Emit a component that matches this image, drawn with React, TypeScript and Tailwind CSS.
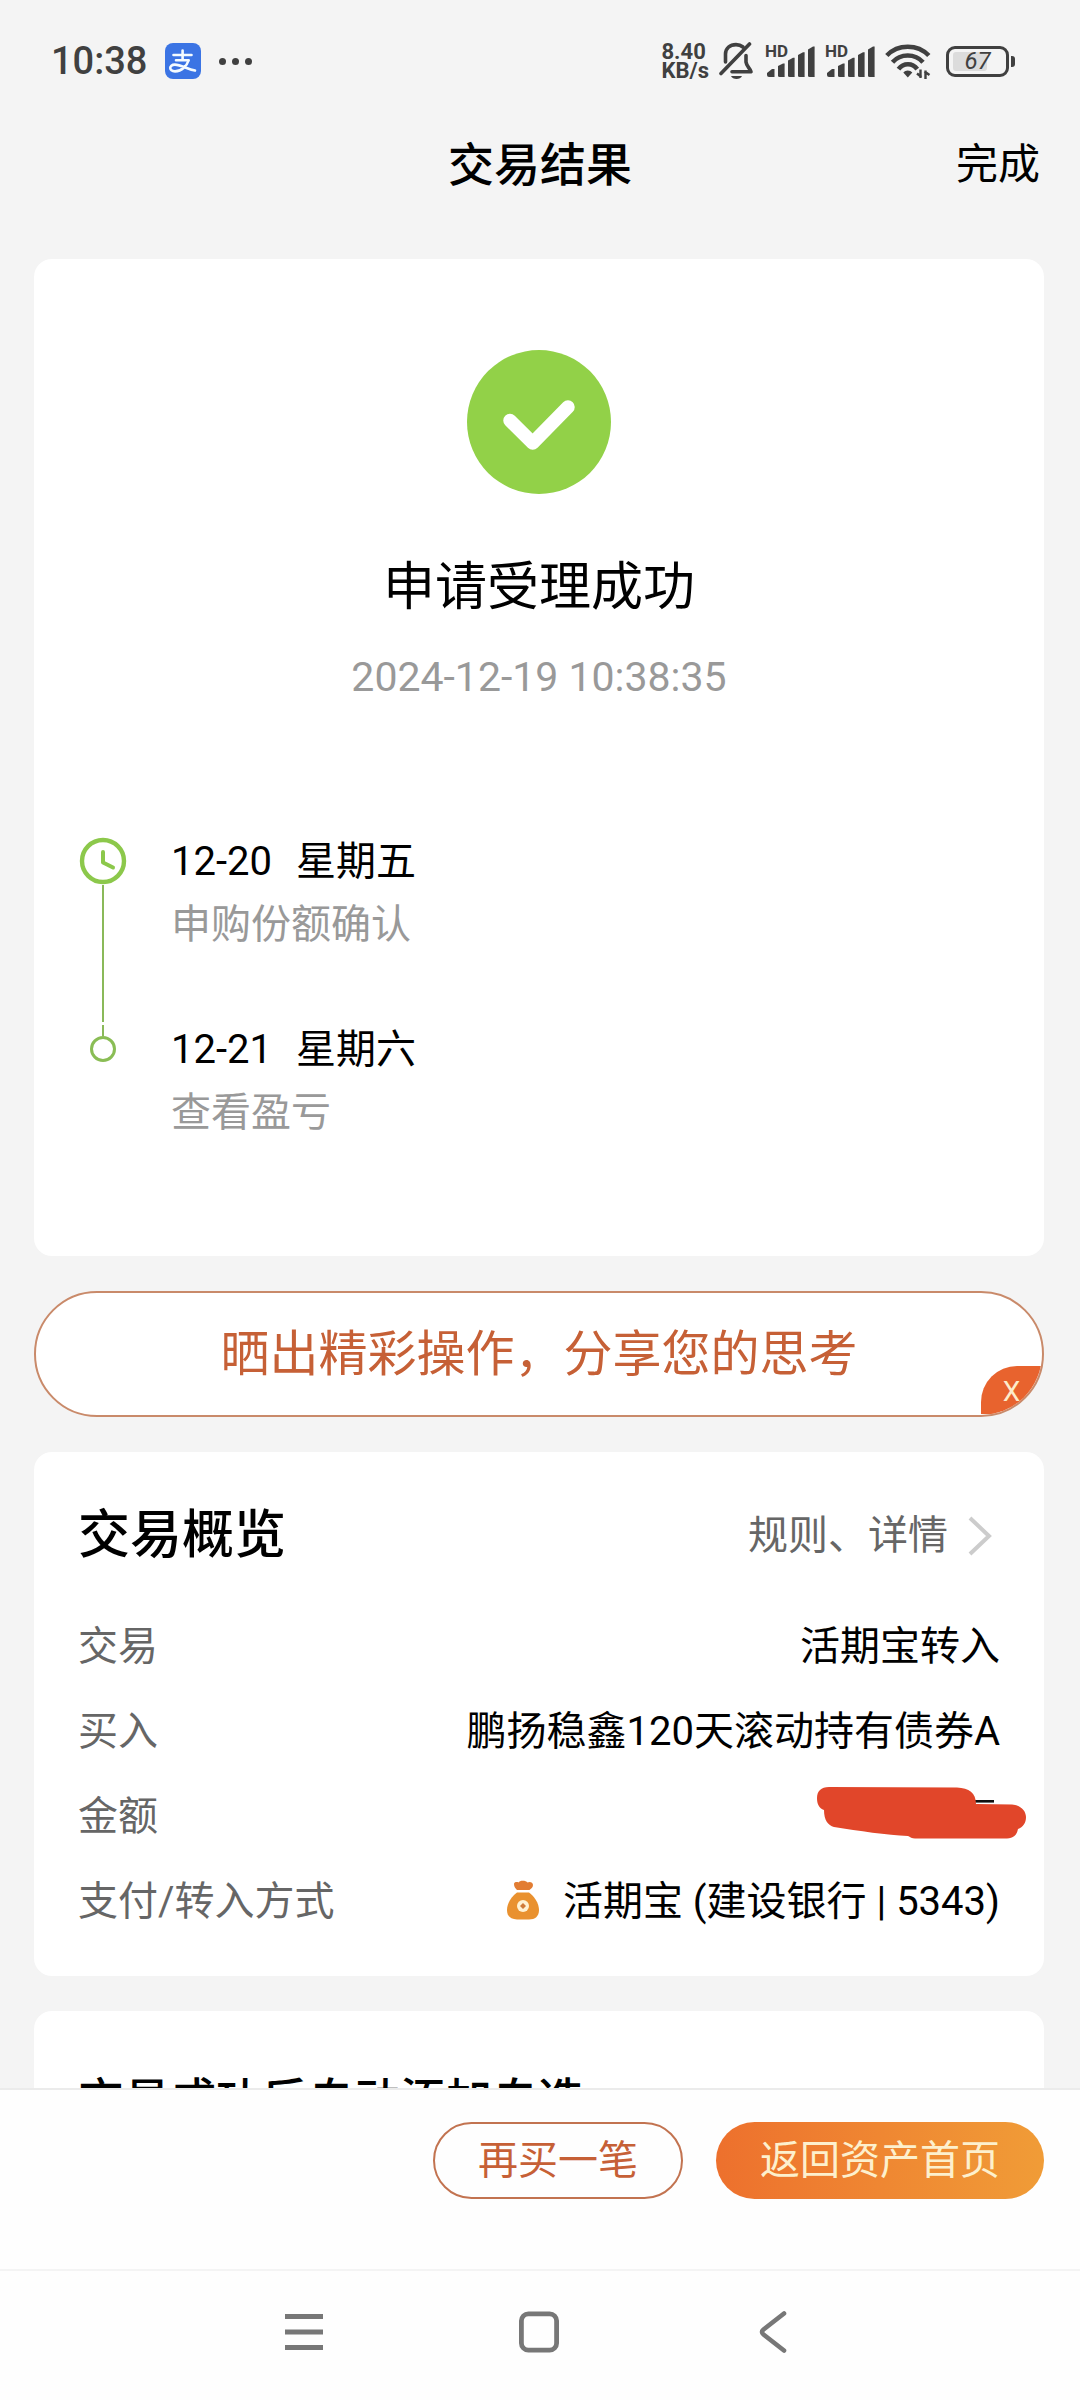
import type { ReactNode } from "react"

const details = [
  { label: "交易", value: "活期宝转入" },
  { label: "买入", value: "鹏扬稳鑫120天滚动持有债券A" },
  { label: "金额", value: <HiddenAmount /> },
  {
    label: "支付/转入方式",
    value: (
      <>
        <MoneyBagIcon />
        <span>活期宝 (建设银行 | 5343)</span>
      </>
    ),
  },
]

function AlipayIcon() {
  return (
    <svg viewBox="0 0 36 36" className="size-9" fill="none">
      <rect width="36" height="36" rx="8" fill="#3b74e4" />
      <g stroke="#f4fbff" strokeWidth="2.6" strokeLinecap="round">
        <path d="M8.5 12H26.5M17.6 7.5V17M11 17.3H23.5" />
        <path d="M23.5 17.5C22 22.5 17 28.3 10 28.4C3.6 28.4 3.8 21.6 9.8 21.6C16 21.6 22 26 30 27.6" />
      </g>
    </svg>
  )
}

function MutedBellIcon() {
  return (
    <svg viewBox="0 0 36 38" className="h-[38px] w-9" fill="none" stroke="#404040" strokeWidth="3.6" strokeLinecap="round">
      <path d="M30.5 2L2 31.5" strokeWidth="3.6" />
      <path d="M6.5 20V12C6.7 6 11 2.6 17 2.6C20 2.6 22 3.4 24 5" />
      <path d="M27 13.5V20C27.5 24.5 31 26 32 29.8H13" strokeLinejoin="round" />
      <path d="M12 34H23C21.5 38 13.5 38 12 34Z" fill="#404040" stroke="none" />
    </svg>
  )
}

function SignalIcon() {
  return (
    <span className="relative block h-8 w-[50px]">
      <svg viewBox="0 0 50 32" className="h-8 w-[50px]" fill="#404040">
        <path d="M2 30V28L7 24H9.5V32H4Q2 32 2 30Z" />
        <path d="M13 21L18 18.5H19.6V32H14.5Q13 32 13 30.5Z" />
        <path d="M23 15.5L28 12.8H29.6V32H24.5Q23 32 23 30.5Z" />
        <path d="M33 10L38 7.2H39.6V32H34.5Q33 32 33 30.5Z" />
        <path d="M43 4.5L48 1.5H49.6V32H44.5Q43 32 43 30.5Z" />
      </svg>
      <span className="absolute left-0 top-0 text-[17px] font-bold leading-[12px]">HD</span>
    </span>
  )
}

function WifiIcon() {
  return (
    <svg viewBox="0 0 47 36" className="mr-1 h-9 w-[47px]" fill="none" stroke="#404040" strokeWidth="4.6">
      <path d="M1.8 12.5C13 .8 32.5 .8 43.8 12.5" />
      <path d="M7.5 19.3C15.5 10.3 30 10.3 38 19.3" />
      <path d="M13.5 26.2C18.5 19.6 27.5 19.6 32.2 26.2" />
      <path d="M18.3 29.5C20.5 26.8 25 26.8 27.3 29.5L22.8 34.5Z" fill="#404040" stroke="none" />
      <path d="M35.5 26.5V35M36.5 34L32 30.5M40.5 36V27.5M39.5 28.5L44.5 32" strokeWidth="2.4" />
    </svg>
  )
}

function Battery() {
  return (
    <div className="flex items-center gap-[2px]">
      <div className="relative flex h-[31px] w-[63px] items-center justify-center rounded-[9px] border-3 border-[#404040]">
        <span className="absolute inset-y-[3px] left-[4px] w-[34px] rounded-[3px] bg-[#dcdcdc]" />
        <span className="relative text-[24px] italic leading-none">67</span>
      </div>
      <span className="h-[11px] w-[4px] rounded-r-[3px] bg-[#404040]" />
    </div>
  )
}

function StatusBar() {
  return (
    <div className="flex h-[122px] shrink-0 items-center justify-between pl-[51px] pr-[65px] text-[#404040]">
      <div className="flex items-center">
        <span className="mr-[18px] text-[38px] font-medium leading-none">10:38</span>
        <AlipayIcon />
        <span className="ml-[18px] flex gap-[6px]">
          <i className="size-[7px] rounded-full bg-[#404040]" />
          <i className="size-[7px] rounded-full bg-[#404040]" />
          <i className="size-[7px] rounded-full bg-[#404040]" />
        </span>
      </div>
      <div className="flex items-center gap-[10px]">
        <div className="text-[22px] font-bold leading-[19px]">
          <div>8.40</div>
          <div>KB/s</div>
        </div>
        <MutedBellIcon />
        <SignalIcon />
        <SignalIcon />
        <WifiIcon />
        <Battery />
      </div>
    </div>
  )
}

function MoneyBagIcon() {
  return (
    <svg viewBox="0 0 32 40" className="mb-1 mr-6 h-10 w-8" fill="none">
      <path
        d="M7 4C7 2 10 1.5 11.5 2.5C12.5 0 19 0 20.5 2.5C22.5 1.2 26 2 26 5C26 7.5 24 8.5 22.5 10H10C8.5 8.5 7 7 7 4Z"
        fill="#e27d33"
      />
      <path d="M10 12.5H22C27 16 32 23 32 30C32 36.5 28 39.5 22 39.5H10C4 39.5 0 36.5 0 30C0 23 5 16 10 12.5Z" fill="#e9912f" />
      <circle cx="16" cy="26" r="6" fill="#fff1d2" />
      <path d="M16 23L19 26L16 29L13 26Z" fill="#cf7a38" />
    </svg>
  )
}

function HiddenAmount() {
  return (
    <svg
      viewBox="0 0 210 54"
      role="img"
      aria-label="金额已隐藏"
      className="absolute -right-[27px] -top-[6px] h-[54px] w-[210px]"
    >
      <path d="M156 15.3H177" stroke="#111" strokeWidth="2.6" />
      <path
        d="M12 1L140 1.5C152 2 159 7 159 18L195 18.5C204 19 209 25 209 31C209 37 206 41 201 43C200 49 196 52.5 190 52.5H98C95 52.5 93 51 91 50C70 49 42 45 17 41C11 39.5 7 34 7 24C2 22 0 18 0 12C0 5 4 1 12 1Z"
        fill="#e1462a"
      />
    </svg>
  )
}

function TimelineText({ date, day, note }: { date: string; day: string; note: string }) {
  return (
    <div className="pt-px text-[40px] leading-[48px]">
      <div className="flex gap-6">
        <span>{date}</span>
        <span>{day}</span>
      </div>
      <div className="mt-[15px] text-[#999]">{note}</div>
    </div>
  )
}

function Card({ className, children }: { className?: string; children: ReactNode }) {
  return <section className={`rounded-[18px] bg-white ${className ?? ""}`}>{children}</section>
}

export default function App() {
  return (
    <div className="flex h-screen flex-col overflow-hidden bg-[#f4f4f4] font-['Roboto','Noto_Sans_CJK_SC',sans-serif] text-black">
      <StatusBar />

      <header className="grid h-[84px] shrink-0 grid-cols-3 items-center px-10 pt-[2px]">
        <h1 className="col-start-2 text-center text-[46px] font-medium leading-none">交易结果</h1>
        <button className="justify-self-end text-[42px] leading-none">完成</button>
      </header>

      <main className="flex min-h-0 flex-1 flex-col gap-[35px] overflow-hidden pl-[34px] pr-9 pt-[53px] *:shrink-0">
        {/* 受理结果 */}
        <Card className="pb-[119px] pt-[91px]">
          <svg viewBox="0 0 144 144" className="mx-auto size-36" fill="none">
            <circle cx="72" cy="72" r="72" fill="#92d148" />
            <path d="M43 70.5L65.7 93L101 57" stroke="#fff" strokeWidth="13.5" strokeLinecap="round" strokeLinejoin="round" />
          </svg>
          <h2 className="mt-16 text-center text-[52px] leading-[60px]">申请受理成功</h2>
          <p className="mt-[35px] text-center text-[41px] leading-[48px] text-[#999]">2024-12-19 10:38:35</p>

          <ol className="mt-[136px] pl-[45px]">
            <li className="flex min-h-[188px] gap-11">
              <div className="flex w-12 flex-col items-center">
                <svg viewBox="0 0 48 48" className="size-12" fill="none" stroke="#8cc84b" strokeLinecap="round" strokeLinejoin="round">
                  <circle cx="24" cy="24" r="21" strokeWidth="4.4" />
                  <path d="M24 15V25.5L34 30.5" strokeWidth="4" />
                </svg>
                <span className="mb-[3px] w-[2px] flex-1 bg-[#8ab959]" />
              </div>
              <TimelineText date="12-20" day="星期五" note="申购份额确认" />
            </li>
            <li className="flex gap-11">
              <div className="flex w-12 flex-col items-center">
                <span className="h-[11px] w-[2px] bg-[#8ab959]" />
                <span className="size-[26px] rounded-full border-3 border-[#8abd55]" />
              </div>
              <TimelineText date="12-21" day="星期六" note="查看盈亏" />
            </li>
          </ol>
        </Card>

        {/* 分享 */}
        <div className="relative h-[126px] overflow-hidden rounded-full border-2 border-[#c98a6a] bg-white">
          <button className="size-full text-[49px] leading-none text-[#c66036]">晒出精彩操作，分享您的思考</button>
          <button
            aria-label="关闭"
            className="absolute bottom-px right-0 h-12 w-[61px] rounded-tl-[36px] bg-[#e8632e] pt-1 text-[28px] leading-none text-[#fdeccb]"
          >
            X
          </button>
        </div>

        {/* 交易概览 */}
        <Card className="px-11 pb-8 pt-[54px]">
          <div className="flex items-center justify-between leading-[60px]">
            <h2 className="text-[52px] font-medium">交易概览</h2>
            <a href="#rules" className="flex items-center gap-5 pr-2 text-[40px] text-[#666]">
              规则、详情
              <svg viewBox="0 0 24 40" className="h-10 w-6" fill="none" stroke="#ccc" strokeWidth="4">
                <path d="M2 2L21 20L2 38" />
              </svg>
            </a>
          </div>
          <dl className="mt-[38px] text-[40px]">
            {details.map(({ label, value }) => (
              <div key={label} className="flex h-[85px] items-center justify-between leading-[50px]">
                <dt className="text-[#666]">{label}</dt>
                <dd className="relative flex min-h-[50px] items-center">{value}</dd>
              </div>
            ))}
          </dl>
        </Card>

        {/* 自动添加自选 */}
        <Card className="h-[240px] px-11 pt-[62px]">
          <h2 className="text-[46px] font-medium leading-[54px]">交易成功后自动添加自选</h2>
        </Card>
      </main>

      <footer className="shrink-0 border-t-2 border-[#ebebeb] bg-[#fefefe]">
        <div className="flex justify-end gap-[33px] pb-[70px] pr-9 pt-8 text-[40px] leading-none">
          <button className="h-[77px] rounded-full border-2 border-[#c27350] px-[43px] text-[#c66036]">再买一笔</button>
          <button className="h-[77px] rounded-full bg-linear-to-r from-[#ed702d] to-[#f09c37] px-11 text-[#fdf0cd]">
            返回资产首页
          </button>
        </div>
        <nav className="flex h-[131px] items-center justify-center gap-[195px] border-t-2 border-[#f4f4f4] pb-2 pr-[2px]">
          <button aria-label="最近任务">
            <svg viewBox="0 0 40 42" className="h-[42px] w-10" fill="none" stroke="#777" strokeWidth="4.8">
              <path d="M1 5.5H39M1 21H39M1 36.5H39" />
            </svg>
          </button>
          <button aria-label="主屏幕">
            <svg viewBox="0 0 40 42" className="h-[42px] w-10" fill="none" stroke="#777" strokeWidth="4.8">
              <rect x="2.4" y="2.8" width="35.2" height="36.4" rx="7" />
            </svg>
          </button>
          <button aria-label="返回">
            <svg viewBox="0 0 40 42" className="h-[42px] w-10" fill="none" stroke="#777" strokeWidth="4.6" strokeLinecap="round">
              <path d="M30 2.5L9.5 18.5Q6.5 21 9.5 23.5L30 39.5" />
            </svg>
          </button>
        </nav>
      </footer>
    </div>
  )
}
